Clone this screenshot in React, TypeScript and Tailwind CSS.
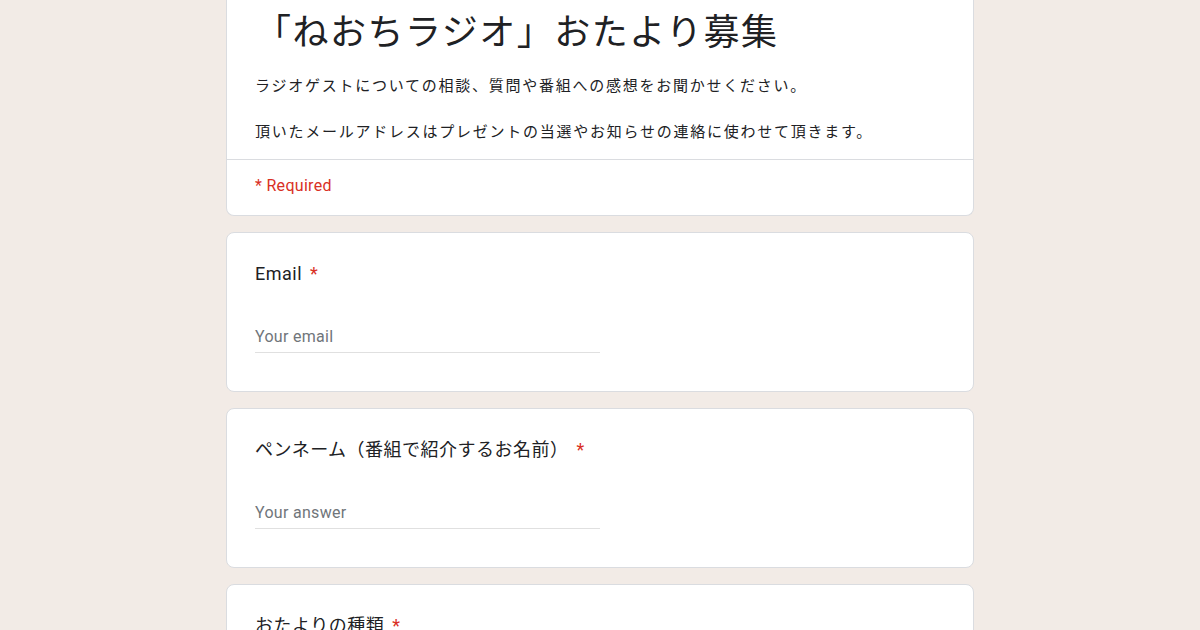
import React from 'react';

const jp = "font-['Roboto','Noto_Sans_CJK_JP',sans-serif]";

function Question({ label, placeholder }: { label: string; placeholder: string }) {
  return (
    <div className="bg-white rounded-lg border border-[#dadce0] px-7 pt-[29px] pb-[38px]">
      <div className="text-[18px] leading-6 text-[#202124] tracking-[0.5px]">
        {label}
        <span className="text-[#d93025] ml-2">*</span>
      </div>
      <div className="mt-[35px] w-[345px] h-8 border-b border-[#e0e0e0] flex items-center text-[16px] text-[#70757a] tracking-[0.3px]">
        {placeholder}
      </div>
    </div>
  );
}

export default function App() {
  return (
    <div className={`h-[630px] overflow-hidden bg-[#f2ebe6] ${jp}`}>
      <div className="w-[748px] mx-auto flex flex-col gap-4">
        {/* Header card, top cut off */}
        <div className="bg-white rounded-b-lg border border-t-0 border-[#dadce0]">
          <div className="px-7 pt-[9px] pb-[15px]">
            <h1 className="text-[36px] leading-[48px] text-[#202124] tracking-[1.5px]">
              「ねおちラジオ」おたより募集
            </h1>
            <p className="mt-[18px] text-[15px] leading-[23px] text-[#202124] tracking-[1.75px] whitespace-pre-line">
              {'ラジオゲストについての相談、質問や番組への感想をお聞かせください。\n\n頂いたメールアドレスはプレゼントの当選やお知らせの連絡に使わせて頂きます。'}
            </p>
          </div>
          <div className="border-t border-[#dadce0] px-7 pt-4 pb-[19px] text-[16px] leading-5 tracking-[0.3px] text-[#d93025]">
            * Required
          </div>
        </div>

        <Question label="Email" placeholder="Your email" />
        <Question label="ペンネーム（番組で紹介するお名前）" placeholder="Your answer" />
        <Question label="おたよりの種類" placeholder="Your answer" />
      </div>
    </div>
  );
}
